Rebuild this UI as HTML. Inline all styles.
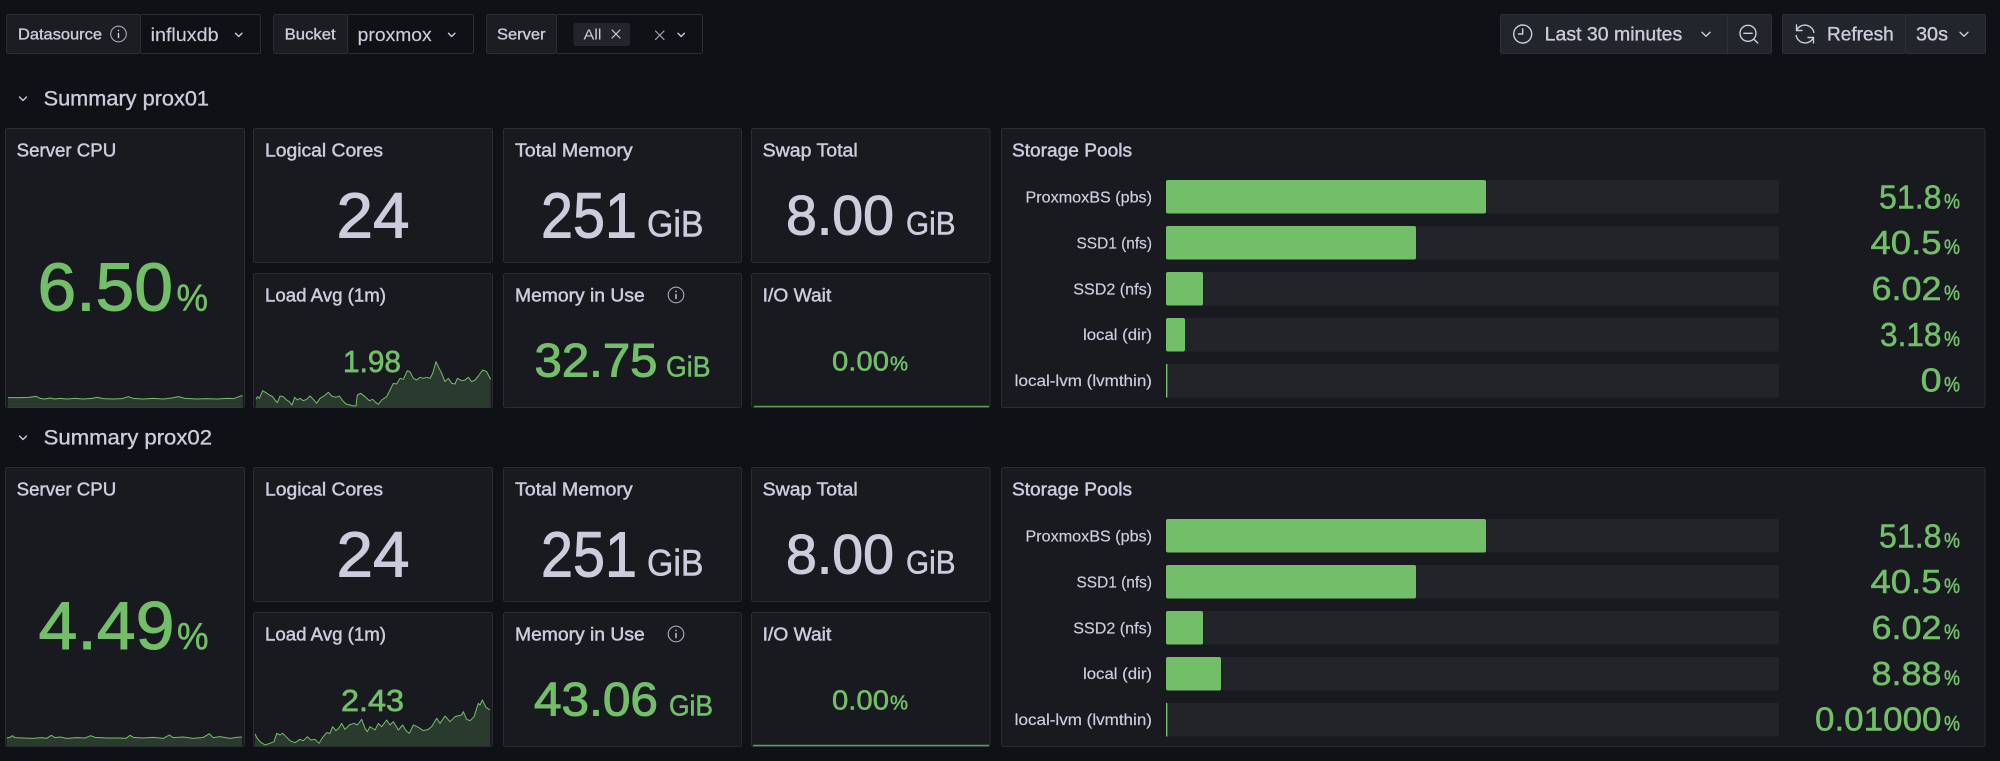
<!DOCTYPE html>
<html lang="en"><head><meta charset="utf-8"><title>Proxmox Summary</title>
<style>
html,body{margin:0;padding:0;background:#101116;width:2000px;height:761px;overflow:hidden}
svg{display:block}
text{font-family:"Liberation Sans",sans-serif;white-space:pre}
.p{fill:#181a20;stroke:#2a2c32;stroke-width:1}
.t{fill:#ccccdc;font-size:18px;stroke:#ccccdc;stroke-width:.45}
.l{fill:#ccccdc;font-size:16px;stroke:#ccccdc;stroke-width:.2}
.g{fill:#73bf69;stroke:#73bf69;stroke-width:.5}.w{fill:#ccccdc;stroke:#ccccdc;stroke-width:.5}
.g.m,.w.m{stroke-width:1}
.b{fill:#73bf69}.tr{fill:#222429}
.ic{fill:none;stroke:#ccccdc;stroke-width:1.4;stroke-linecap:round;stroke-linejoin:round}
.ln{fill:none;stroke:#73bf69;stroke-width:3;stroke-linejoin:round}
.ar{fill:#73bf69;fill-opacity:.2;stroke:none}
.btn{fill:#22252b;stroke:#2f3137}
.inp{fill:#101116;stroke:#2c2e34}.lab{fill:#1b1d22;stroke:#2c2e34}
.ui{fill:#ccccdc;stroke:#ccccdc;stroke-width:.35}
</style></head><body>
<svg width="2000" height="761" viewBox="0 0 2000 761" xmlns="http://www.w3.org/2000/svg">
<rect width="2000" height="761" fill="#101116"/>

<!-- Variables -->
<rect class="inp" x="140.5" y="14.5" width="120" height="39" rx="2"/>
<rect class="lab" x="6.5" y="14.5" width="134" height="39" rx="2"/>
<text class="ui" x="18" y="39.5" font-size="16" textLength="84" lengthAdjust="spacingAndGlyphs">Datasource</text>
<circle class="ic" cx="118.5" cy="34" r="7.8" style="stroke-width:1.1;opacity:.8"/>
<path class="ic" d="M118.5 33.5v4M118.5 30.3v.3"/>
<text x="150.6" y="41" font-size="18" fill="#ccccdc" stroke="#ccccdc" stroke-width=".15" textLength="68" lengthAdjust="spacingAndGlyphs">influxdb</text>
<path class="ic" d="M235.5 33.3l3.2 3.2 3.2-3.2"/>

<rect class="inp" x="347.5" y="14.5" width="126" height="39" rx="2"/>
<rect class="lab" x="273.5" y="14.5" width="74" height="39" rx="2"/>
<text class="ui" x="284.7" y="39.5" font-size="16" textLength="51" lengthAdjust="spacingAndGlyphs">Bucket</text>
<text x="357.7" y="41" font-size="18" fill="#ccccdc" stroke="#ccccdc" stroke-width=".15" textLength="74" lengthAdjust="spacingAndGlyphs">proxmox</text>
<path class="ic" d="M448.5 33.3l3.2 3.2 3.2-3.2"/>

<rect class="inp" x="556.5" y="14.5" width="146" height="39" rx="2"/>
<rect class="lab" x="486.5" y="14.5" width="70" height="39" rx="2"/>
<text class="ui" x="497" y="39.5" font-size="16" textLength="48.5" lengthAdjust="spacingAndGlyphs">Server</text>
<rect x="573.5" y="23" width="56.5" height="23" rx="2" fill="#22252b"/>
<text x="583.5" y="39.3" font-size="15" fill="#ccccdc" textLength="18" lengthAdjust="spacingAndGlyphs">All</text>
<path class="ic" d="M612 30l8 8M620 30l-8 8" style="stroke-width:1.2"/>
<path class="ic" d="M655.5 31l8.5 8.5M664 31l-8.5 8.5" style="stroke-width:1.2;opacity:.8"/>
<path class="ic" d="M678 33.3l3.2 3.2 3.2-3.2"/>

<!-- Time controls -->
<rect class="btn" x="1500.5" y="14.5" width="271" height="39" rx="2"/>
<path d="M1727.5 15v38" stroke="#2f3137"/>
<circle class="ic" cx="1522.7" cy="34" r="9"/>
<path class="ic" d="M1522.7 29v5h-4.2"/>
<text class="ui" x="1544.7" y="40.7" font-size="19" textLength="137.5" lengthAdjust="spacingAndGlyphs">Last 30 minutes</text>
<path class="ic" d="M1702 32.3l4 4 4-4"/>
<circle class="ic" cx="1748" cy="33.3" r="8"/>
<path class="ic" d="M1743.8 33.3h8.4M1753.8 39.2l4 3.8"/>

<rect class="btn" x="1782.5" y="14.5" width="123" height="39" rx="2"/>
<rect class="btn" x="1905.5" y="14.5" width="80" height="39" rx="2"/>
<g transform="translate(1805 34)"><path class="ic" d="M-8.5-9v5.5h5.5M-8.5-3.5A9.2 9.2 0 0 1 8.9-1.5M8.5 9V3.5H3M8.5 3.5A9.2 9.2 0 0 1-8.9 1.5"/></g>
<text class="ui" x="1827" y="40.7" font-size="19" textLength="66.7" lengthAdjust="spacingAndGlyphs">Refresh</text>
<text class="ui" x="1916" y="40.7" font-size="19" textLength="32" lengthAdjust="spacingAndGlyphs">30s</text>
<path class="ic" d="M1960 32.3l4 4 4-4"/>

<!-- Row 1 -->
<path class="ic" d="M19.5 97l3.5 3.5 3.5-3.5"/>
<text class="ui" x="43.6" y="105.5" font-size="21" textLength="165.4" lengthAdjust="spacingAndGlyphs">Summary prox01</text>

<rect class="p" x="5.5" y="128.5" width="239" height="279" rx="2"/>
<rect class="p" x="253.5" y="128.5" width="239" height="134" rx="2"/>
<rect class="p" x="253.5" y="273.5" width="239" height="134" rx="2"/>
<rect class="p" x="503.5" y="128.5" width="238" height="134" rx="2"/>
<rect class="p" x="503.5" y="273.5" width="238" height="134" rx="2"/>
<rect class="p" x="751.5" y="128.5" width="238.5" height="134" rx="2"/>
<rect class="p" x="751.5" y="273.5" width="238.5" height="134" rx="2"/>
<rect class="p" x="1001.5" y="128.5" width="983.5" height="279" rx="2"/>

<text class="t" x="16.7" y="156.7" textLength="99.5" lengthAdjust="spacingAndGlyphs">Server CPU</text>
<text class="g m" x="37.5" y="310.5" font-size="68" textLength="135.5" lengthAdjust="spacingAndGlyphs">6.50</text>
<text class="g" x="176.5" y="310.5" font-size="38" textLength="31.5" lengthAdjust="spacingAndGlyphs">%</text>
<svg x="0" y="125" width="500" height="290" viewBox="0 0 1500 870">
<polygon class="ar" points="24,818 60,818 85,817 108,814 120,820 135,822 150,819 165,822 180,820 200,822 225,820 250,822 275,820 292,817 310,821 340,822 365,821 385,815 400,820 430,822 460,820 490,822 515,819 535,815 555,820 590,822 620,821 650,822 680,820 700,821 725,812 728,813 728,848 24,848"/>
<polyline class="ln" points="24,818 60,818 85,817 108,814 120,820 135,822 150,819 165,822 180,820 200,822 225,820 250,822 275,820 292,817 310,821 340,822 365,821 385,815 400,820 430,822 460,820 490,822 515,819 535,815 555,820 590,822 620,821 650,822 680,820 700,821 725,812 728,813"/>
</svg>

<text class="t" x="265" y="156.7" textLength="118" lengthAdjust="spacingAndGlyphs">Logical Cores</text>
<text class="w m" x="336.5" y="237.5" font-size="64" textLength="73" lengthAdjust="spacingAndGlyphs">24</text>

<text class="t" x="265" y="301.7" textLength="121" lengthAdjust="spacingAndGlyphs">Load Avg (1m)</text>
<svg x="250" y="270" width="250" height="145" viewBox="0 0 750 435">
<polygon class="ar" points="18,388 22,380 28,385 38,362 48,368 58,375 68,380 75,390 82,398 90,378 100,380 110,390 118,395 126,405 134,382 142,390 150,385 160,392 170,388 180,378 190,388 200,400 210,385 222,378 235,367 245,378 258,382 268,378 278,392 288,402 300,405 312,408 318,408 322,375 332,370 345,380 358,392 368,388 378,398 385,403 395,390 410,380 420,360 430,340 440,342 450,325 460,328 472,302 480,305 490,325 500,330 510,322 520,325 530,322 540,325 548,310 558,275 565,290 575,310 585,335 595,325 605,340 615,342 622,325 635,332 645,330 655,322 665,335 675,330 685,318 698,300 710,305 722,328 722,412 18,412"/>
<polyline class="ln" points="18,388 22,380 28,385 38,362 48,368 58,375 68,380 75,390 82,398 90,378 100,380 110,390 118,395 126,405 134,382 142,390 150,385 160,392 170,388 180,378 190,388 200,400 210,385 222,378 235,367 245,378 258,382 268,378 278,392 288,402 300,405 312,408 318,408 322,375 332,370 345,380 358,392 368,388 378,398 385,403 395,390 410,380 420,360 430,340 440,342 450,325 460,328 472,302 480,305 490,325 500,330 510,322 520,325 530,322 540,325 548,310 558,275 565,290 575,310 585,335 595,325 605,340 615,342 622,325 635,332 645,330 655,322 665,335 675,330 685,318 698,300 710,305 722,328"/>
</svg>
<text class="g m" x="343" y="372" font-size="31" textLength="58" lengthAdjust="spacingAndGlyphs" style="stroke-width:.7">1.98</text>

<text class="t" x="515" y="156.7" textLength="117.7" lengthAdjust="spacingAndGlyphs">Total Memory</text>
<text class="w m" x="541" y="237.5" font-size="64" textLength="96" lengthAdjust="spacingAndGlyphs">251</text>
<text class="w" x="647" y="236.5" font-size="37" textLength="56.5" lengthAdjust="spacingAndGlyphs">GiB</text>

<text class="t" x="515" y="301.7" textLength="129.7" lengthAdjust="spacingAndGlyphs">Memory in Use</text>
<circle class="ic" cx="676" cy="295" r="7.8" style="stroke-width:1.1;opacity:.8"/>
<path class="ic" d="M676 294.5v4M676 291.3v.3"/>
<text class="g m" x="534.5" y="376.5" font-size="47" textLength="123" lengthAdjust="spacingAndGlyphs">32.75</text>
<text class="g" x="666" y="376.5" font-size="29" textLength="44.5" lengthAdjust="spacingAndGlyphs">GiB</text>

<text class="t" x="762.7" y="156.7" textLength="95" lengthAdjust="spacingAndGlyphs">Swap Total</text>
<text class="w m" x="786" y="234.3" font-size="56" textLength="108" lengthAdjust="spacingAndGlyphs">8.00</text>
<text class="w" x="906" y="234.3" font-size="32" textLength="49.5" lengthAdjust="spacingAndGlyphs">GiB</text>

<text class="t" x="762.7" y="301.7" textLength="68.6" lengthAdjust="spacingAndGlyphs">I/O Wait</text>
<text class="g" x="832" y="370.7" font-size="28" textLength="57" lengthAdjust="spacingAndGlyphs">0.00</text>
<text class="g" x="890" y="370.7" font-size="20" textLength="18" lengthAdjust="spacingAndGlyphs">%</text>
<path d="M754 406.5H989" stroke="#5f9c58" stroke-width="1.6"/>

<text class="t" x="1012" y="156.7" textLength="120" lengthAdjust="spacingAndGlyphs">Storage Pools</text>

<rect class="tr" x="1166" y="180" width="613" height="33.5" rx="2"/><rect class="b" x="1166" y="180" width="320" height="33.5" rx="2"/>
<rect class="tr" x="1166" y="226" width="613" height="33.5" rx="2"/><rect class="b" x="1166" y="226" width="250" height="33.5" rx="2"/>
<rect class="tr" x="1166" y="272" width="613" height="33.5" rx="2"/><rect class="b" x="1166" y="272" width="37" height="33.5" rx="2"/>
<rect class="tr" x="1166" y="318" width="613" height="33.5" rx="2"/><rect class="b" x="1166" y="318" width="19" height="33.5" rx="2"/>
<rect class="tr" x="1166" y="364" width="613" height="33.5" rx="2"/><rect class="b" x="1166" y="364" width="1.4" height="33.5"/>

<text class="l" x="1025.5" y="202.3" textLength="126.5" lengthAdjust="spacingAndGlyphs">ProxmoxBS (pbs)</text>
<text class="l" x="1076.5" y="248.3" textLength="75.5" lengthAdjust="spacingAndGlyphs">SSD1 (nfs)</text>
<text class="l" x="1073.3" y="294.3" textLength="78.7" lengthAdjust="spacingAndGlyphs">SSD2 (nfs)</text>
<text class="l" x="1083" y="340" textLength="69" lengthAdjust="spacingAndGlyphs">local (dir)</text>
<text class="l" x="1014.7" y="386" textLength="137.3" lengthAdjust="spacingAndGlyphs">local-lvm (lvmthin)</text>

<text class="g" x="1879" y="208.3" font-size="33" textLength="62.5" lengthAdjust="spacingAndGlyphs">51.8</text><text class="g" x="1944" y="208.3" font-size="21" textLength="16" lengthAdjust="spacingAndGlyphs">%</text>
<text class="g" x="1870.5" y="254" font-size="33" textLength="71" lengthAdjust="spacingAndGlyphs">40.5</text><text class="g" x="1944" y="254" font-size="21" textLength="16" lengthAdjust="spacingAndGlyphs">%</text>
<text class="g" x="1871.5" y="300" font-size="33" textLength="70" lengthAdjust="spacingAndGlyphs">6.02</text><text class="g" x="1944" y="300" font-size="21" textLength="16" lengthAdjust="spacingAndGlyphs">%</text>
<text class="g" x="1880" y="346" font-size="33" textLength="61.5" lengthAdjust="spacingAndGlyphs">3.18</text><text class="g" x="1944" y="346" font-size="21" textLength="16" lengthAdjust="spacingAndGlyphs">%</text>
<text class="g" x="1920.6" y="391.7" font-size="33" textLength="21" lengthAdjust="spacingAndGlyphs">0</text><text class="g" x="1944" y="391.7" font-size="21" textLength="16" lengthAdjust="spacingAndGlyphs">%</text>

<!-- Row 2 -->
<path class="ic" d="M19.5 436l3.5 3.5 3.5-3.5"/>
<text class="ui" x="43.7" y="444.4" font-size="21" textLength="168.3" lengthAdjust="spacingAndGlyphs">Summary prox02</text>

<rect class="p" x="5.5" y="467.5" width="239" height="279" rx="2"/>
<rect class="p" x="253.5" y="467.5" width="239" height="134" rx="2"/>
<rect class="p" x="253.5" y="612.5" width="239" height="134" rx="2"/>
<rect class="p" x="503.5" y="467.5" width="238" height="134" rx="2"/>
<rect class="p" x="503.5" y="612.5" width="238" height="134" rx="2"/>
<rect class="p" x="751.5" y="467.5" width="238.5" height="134" rx="2"/>
<rect class="p" x="751.5" y="612.5" width="238.5" height="134" rx="2"/>
<rect class="p" x="1001.5" y="467.5" width="983.5" height="279" rx="2"/>

<text class="t" x="16.7" y="495.7" textLength="99.5" lengthAdjust="spacingAndGlyphs">Server CPU</text>
<text class="g m" x="38.5" y="649" font-size="68" textLength="136" lengthAdjust="spacingAndGlyphs">4.49</text>
<text class="g" x="177" y="649" font-size="38" textLength="31.5" lengthAdjust="spacingAndGlyphs">%</text>
<svg x="0" y="410" width="500" height="351" viewBox="0 0 1500 1053">
<polygon class="ar" points="20,984 30,982 37,977 45,983 70,984 100,985 125,983 140,985 154,976 165,983 180,981 200,985 230,983 255,984 272,977 285,982 320,984 360,984 378,985 390,976 400,982 430,984 460,982 490,985 508,975 520,983 550,981 580,985 610,982 628,971 640,983 660,980 690,985 710,982 726,981 726,1008 20,1008"/>
<polyline class="ln" points="20,984 30,982 37,977 45,983 70,984 100,985 125,983 140,985 154,976 165,983 180,981 200,985 230,983 255,984 272,977 285,982 320,984 360,984 378,985 390,976 400,982 430,984 460,982 490,985 508,975 520,983 550,981 580,985 610,982 628,971 640,983 660,980 690,985 710,982 726,981"/>
</svg>

<text class="t" x="265" y="495.7" textLength="118" lengthAdjust="spacingAndGlyphs">Logical Cores</text>
<text class="w m" x="336.5" y="576.5" font-size="64" textLength="73" lengthAdjust="spacingAndGlyphs">24</text>

<text class="t" x="265" y="640.7" textLength="121" lengthAdjust="spacingAndGlyphs">Load Avg (1m)</text>
<svg x="250" y="610" width="250" height="145" viewBox="0 0 750 435">
<polygon class="ar" points="15,372 22,385 30,395 45,405 60,400 72,395 80,370 90,375 98,370 110,382 120,392 135,398 150,388 160,392 172,380 182,390 195,388 207,400 218,382 230,368 240,370 248,350 258,362 268,352 275,340 285,358 298,345 312,340 322,345 335,328 345,355 352,365 360,350 375,360 385,340 395,350 410,330 420,345 430,335 445,360 458,345 468,362 478,370 490,345 505,352 520,362 535,358 545,350 560,325 570,340 585,318 600,335 615,320 635,315 640,305 650,328 660,332 672,320 685,280 690,285 697,270 708,292 720,300 720,408 15,408"/>
<polyline class="ln" points="15,372 22,385 30,395 45,405 60,400 72,395 80,370 90,375 98,370 110,382 120,392 135,398 150,388 160,392 172,380 182,390 195,388 207,400 218,382 230,368 240,370 248,350 258,362 268,352 275,340 285,358 298,345 312,340 322,345 335,328 345,355 352,365 360,350 375,360 385,340 395,350 410,330 420,345 430,335 445,360 458,345 468,362 478,370 490,345 505,352 520,362 535,358 545,350 560,325 570,340 585,318 600,335 615,320 635,315 640,305 650,328 660,332 672,320 685,280 690,285 697,270 708,292 720,300"/>
</svg>
<text class="g m" x="341" y="711" font-size="31" textLength="63" lengthAdjust="spacingAndGlyphs" style="stroke-width:.7">2.43</text>

<text class="t" x="515" y="495.7" textLength="117.7" lengthAdjust="spacingAndGlyphs">Total Memory</text>
<text class="w m" x="541" y="576.5" font-size="64" textLength="96" lengthAdjust="spacingAndGlyphs">251</text>
<text class="w" x="647" y="575.5" font-size="37" textLength="56.5" lengthAdjust="spacingAndGlyphs">GiB</text>

<text class="t" x="515" y="640.7" textLength="129.7" lengthAdjust="spacingAndGlyphs">Memory in Use</text>
<circle class="ic" cx="676" cy="634" r="7.8" style="stroke-width:1.1;opacity:.8"/>
<path class="ic" d="M676 633.5v4M676 630.3v.3"/>
<text class="g m" x="534" y="715.5" font-size="47" textLength="124" lengthAdjust="spacingAndGlyphs">43.06</text>
<text class="g" x="669" y="715.5" font-size="29" textLength="44" lengthAdjust="spacingAndGlyphs">GiB</text>

<text class="t" x="762.7" y="495.7" textLength="95" lengthAdjust="spacingAndGlyphs">Swap Total</text>
<text class="w m" x="786" y="573.3" font-size="56" textLength="108" lengthAdjust="spacingAndGlyphs">8.00</text>
<text class="w" x="906" y="573.3" font-size="32" textLength="49.5" lengthAdjust="spacingAndGlyphs">GiB</text>

<text class="t" x="762.7" y="640.7" textLength="68.6" lengthAdjust="spacingAndGlyphs">I/O Wait</text>
<text class="g" x="832" y="709.7" font-size="28" textLength="57" lengthAdjust="spacingAndGlyphs">0.00</text>
<text class="g" x="890" y="709.7" font-size="20" textLength="18" lengthAdjust="spacingAndGlyphs">%</text>
<path d="M753 745.5H989" stroke="#5f9c58" stroke-width="1.6"/>

<text class="t" x="1012" y="495.7" textLength="120" lengthAdjust="spacingAndGlyphs">Storage Pools</text>

<rect class="tr" x="1166" y="519" width="613" height="33.5" rx="2"/><rect class="b" x="1166" y="519" width="320" height="33.5" rx="2"/>
<rect class="tr" x="1166" y="565" width="613" height="33.5" rx="2"/><rect class="b" x="1166" y="565" width="250" height="33.5" rx="2"/>
<rect class="tr" x="1166" y="611" width="613" height="33.5" rx="2"/><rect class="b" x="1166" y="611" width="37" height="33.5" rx="2"/>
<rect class="tr" x="1166" y="657" width="613" height="33.5" rx="2"/><rect class="b" x="1166" y="657" width="55" height="33.5" rx="2"/>
<rect class="tr" x="1166" y="703" width="613" height="33.5" rx="2"/><rect class="b" x="1166" y="703" width="1.4" height="33.5"/>

<text class="l" x="1025.5" y="541.3" textLength="126.5" lengthAdjust="spacingAndGlyphs">ProxmoxBS (pbs)</text>
<text class="l" x="1076.5" y="587.3" textLength="75.5" lengthAdjust="spacingAndGlyphs">SSD1 (nfs)</text>
<text class="l" x="1073.3" y="633.3" textLength="78.7" lengthAdjust="spacingAndGlyphs">SSD2 (nfs)</text>
<text class="l" x="1083" y="679" textLength="69" lengthAdjust="spacingAndGlyphs">local (dir)</text>
<text class="l" x="1014.7" y="725" textLength="137.3" lengthAdjust="spacingAndGlyphs">local-lvm (lvmthin)</text>

<text class="g" x="1879" y="547.3" font-size="33" textLength="62.5" lengthAdjust="spacingAndGlyphs">51.8</text><text class="g" x="1944" y="547.3" font-size="21" textLength="16" lengthAdjust="spacingAndGlyphs">%</text>
<text class="g" x="1870.5" y="593" font-size="33" textLength="71" lengthAdjust="spacingAndGlyphs">40.5</text><text class="g" x="1944" y="593" font-size="21" textLength="16" lengthAdjust="spacingAndGlyphs">%</text>
<text class="g" x="1871.5" y="639" font-size="33" textLength="70" lengthAdjust="spacingAndGlyphs">6.02</text><text class="g" x="1944" y="639" font-size="21" textLength="16" lengthAdjust="spacingAndGlyphs">%</text>
<text class="g" x="1871.5" y="685" font-size="33" textLength="70" lengthAdjust="spacingAndGlyphs">8.88</text><text class="g" x="1944" y="685" font-size="21" textLength="16" lengthAdjust="spacingAndGlyphs">%</text>
<text class="g" x="1815" y="730.7" font-size="33" textLength="126.5" lengthAdjust="spacingAndGlyphs">0.01000</text><text class="g" x="1944" y="730.7" font-size="21" textLength="16" lengthAdjust="spacingAndGlyphs">%</text>
</svg>
</body></html>
